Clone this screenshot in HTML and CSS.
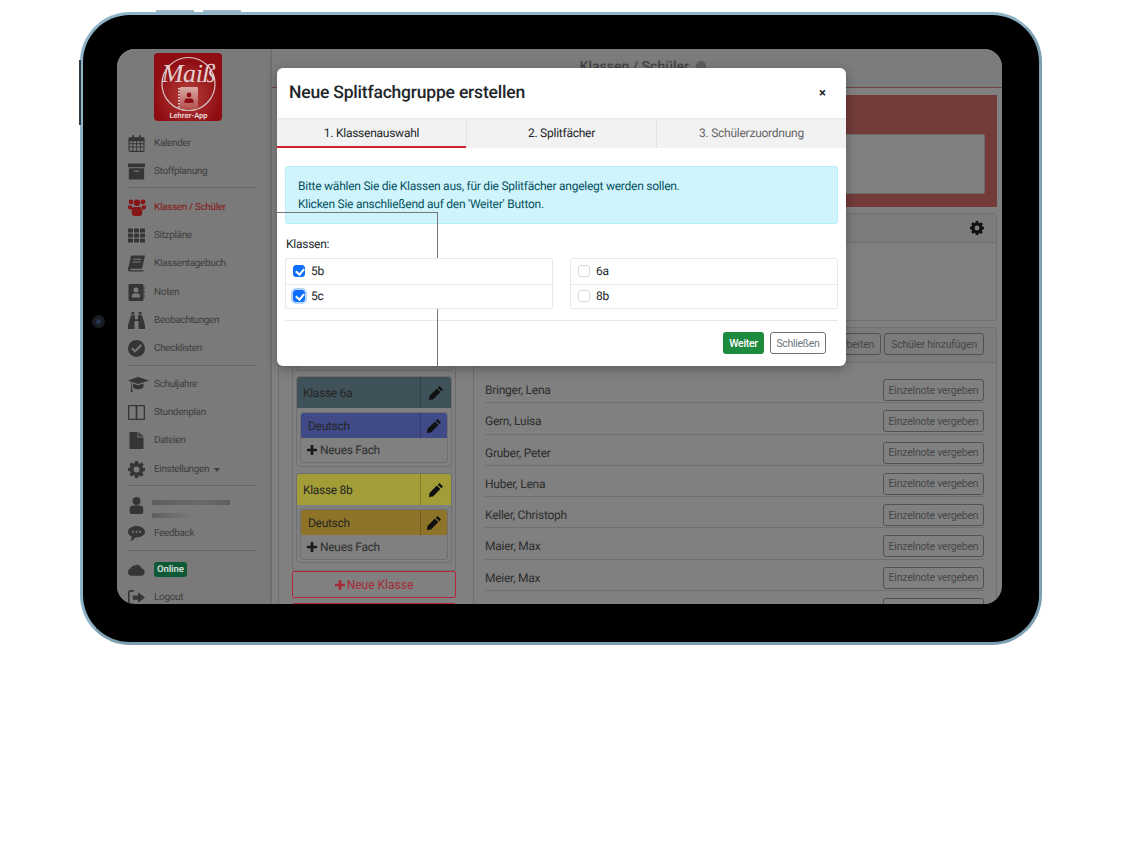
FILE: index.html
```html
<!DOCTYPE html>
<html lang="de">
<head>
  <meta charset="UTF-8">
  <title>Lehrer-App</title>
  <link rel="stylesheet" href="styles.css">
</head>
<body>

  <svg class="icon-defs" width="0" height="0">
    <symbol id="i-calendar" viewBox="0 0 17 18"><path fill-rule="evenodd" d="M1.5 2.5H4V1a1 1 0 0 1 2 0v1.500h5V1a1 1 0 0 1 2 0v1.500h2.500A1.500 1.500 0 0 1 17 4v12.500a1.500 1.500 0 0 1-1.500 1.500h-14A1.500 1.500 0 0 1 0 16.500V4a1.500 1.500 0 0 1 1.500-1.500zM1.200 6.500v2.300h3V6.500zm4 0v2.300h3V6.500zm4 0v2.300h3V6.500zm4 0v2.300h2.600V6.500zm-12 3.300v2.500h3V9.800zm4 0v2.500h3V9.800zm4 0v2.500h3V9.800zm4 0v2.500h2.600V9.800zm-12 3.500v3.400h3v-3.400zm4 0v3.400h3v-3.400zm4 0v3.400h3v-3.400zm4 0v3.400h2.600v-3.400z"/></symbol>
    <symbol id="i-archive" viewBox="0 0 16 15"><path fill-rule="evenodd" d="M0 0h16v3.500H0zM.8 4.500h14.400V15H.8zM5.500 6.500v1.200h5V6.500z"/></symbol>
    <symbol id="i-users" viewBox="0 0 18 17"><circle cx="3" cy="3" r="2.400"/><circle cx="15" cy="3" r="2.400"/><circle cx="9" cy="3.800" r="3.300"/><path d="M0 6.500h3.500c.8 1.300 1.300 2.500 1.300 4H2.200C.8 10.500 0 9.500 0 8.200zM18 6.500h-3.500c-.8 1.300-1.300 2.500-1.300 4h2.600c1.400 0 2.200-1 2.200-2.300zM6.500 8h5c1.700 0 2.700 1.500 2.700 3.500V14c0 1.700-1 3-2.800 3H6.600c-1.800 0-2.800-1.300-2.800-3v-2.500C3.800 9.500 4.800 8 6.500 8z"/></symbol>
    <symbol id="i-th" viewBox="0 0 17 14"><rect width="5" height="4" rx=".6"/><rect x="6" width="5" height="4" rx=".6"/><rect x="12" width="5" height="4" rx=".6"/><rect y="5" width="5" height="4" rx=".6"/><rect x="6" y="5" width="5" height="4" rx=".6"/><rect x="12" y="5" width="5" height="4" rx=".6"/><rect y="10" width="5" height="4" rx=".6"/><rect x="6" y="10" width="5" height="4" rx=".6"/><rect x="12" y="10" width="5" height="4" rx=".6"/></symbol>
    <symbol id="i-book" viewBox="0 0 16 15"><path fill-rule="evenodd" d="M3 0h13l-2.800 12.500H2.500a.7.7 0 0 0 0 1.300h12l-.3 1.200H2C.5 15-.3 14 .1 12.500zM5 3l-.2 1h7.500l.2-1zM4.400 5.500l-.2 1h7.500l.2-1z"/></symbol>
    <symbol id="i-contact" viewBox="0 0 16 17"><path fill-rule="evenodd" d="M1.500 0h12A1.500 1.500 0 0 1 15 1.500v14a1.500 1.500 0 0 1-1.500 1.500h-12A1.500 1.500 0 0 1 0 15.500v-14A1.500 1.500 0 0 1 1.500 0zM7.500 3.500a2.500 2.500 0 1 0 0 5 2.500 2.500 0 0 0 0-5zM3.500 13.500h8v-1.800c0-1.300-.9-2.200-2.100-2.200H5.600c-1.200 0-2.100.9-2.100 2.200z"/><rect x="15" y="3" width="1" height="2.500"/><rect x="15" y="7" width="1" height="2.500"/><rect x="15" y="11" width="1" height="2.500"/></symbol>
    <symbol id="i-binoculars" viewBox="0 0 17 17"><path d="M3.500 0h2.700v2.500H3.500zM10.800 0h2.700v2.500h-2.700zM3 3.300h4v4h3v-4h4l3 10V17h-6.500V9h-4v8H0v-3.700z"/></symbol>
    <symbol id="i-check" viewBox="0 0 16 16"><path fill-rule="evenodd" d="M8 0a8 8 0 1 1 0 16A8 8 0 0 1 8 0zM4.300 7 2.900 8.400l3.700 3.700 6.600-6.600L11.800 4.100 6.600 9.300z"/></symbol>
    <symbol id="i-cap" viewBox="0 0 21 15"><path d="M10 0l11 3.500-11 3.500-6-2v3.800c.5.500.5 1 0 1.500l.6 4.700H2.700l.6-4.700c-.5-.5-.5-1 0-1.500V4.700L0 3.500zM5 6.500l5 1.700 5.500-1.700v3.200c0 1.500-2.500 2.500-5.500 2.500s-5-1-5-2.500z"/></symbol>
    <symbol id="i-columns" viewBox="0 0 16 14"><path fill-rule="evenodd" d="M1 0h14a1 1 0 0 1 1 1v12a1 1 0 0 1-1 1H1a1 1 0 0 1-1-1V1a1 1 0 0 1 1-1zm.2 1.200v11.600h6V1.200zm7.600 0v11.600h6V1.200z"/></symbol>
    <symbol id="i-file" viewBox="0 0 14 17"><path d="M0 0h8v5.500h6V17H0zM9 0l5 4.500H9z"/></symbol>
    <symbol id="i-gear" viewBox="0 0 16 16"><path fill-rule="evenodd" d="M6.600 0h2.800l.4 2.200c.4.100.8.300 1.100.5l1.900-1.300 2 2-1.300 1.900c.2.300.4.700.5 1.100l2 .3v2.800l-2 .4c-.1.400-.3.800-.5 1.100l1.200 1.800-2 2-1.800-1.200c-.3.200-.7.400-1.100.5L9.400 16H6.600l-.4-2.100c-.4-.1-.8-.3-1.100-.5l-1.800 1.200-2-2 1.200-1.800c-.2-.3-.4-.7-.5-1.100L0 9.300V6.500l2-.4c.1-.4.300-.8.500-1.100L1.300 3.300l2-2 1.800 1.300c.3-.2.700-.4 1.100-.5zM8 5.200a2.800 2.800 0 1 0 0 5.600 2.800 2.800 0 0 0 0-5.600z"/></symbol>
    <symbol id="i-user" viewBox="0 0 12 15"><circle cx="6" cy="3.500" r="3.500"/><path d="M3 7.500h6c1.800 0 3 1.400 3 3.300V13c0 1.200-.8 2-2 2H2c-1.200 0-2-.8-2-2v-2.200c0-1.900 1.200-3.300 3-3.300z"/></symbol>
    <symbol id="i-comment" viewBox="0 0 17 15"><path fill-rule="evenodd" d="M8.500 0C13.200 0 17 2.500 17 5.800s-3.800 5.700-8.500 5.700h-1.200C6.200 13 4.500 14.500 2 15c1-1 1.600-2.200 1.800-4.200C1.500 9.800 0 8 0 5.800 0 2.500 3.800 0 8.500 0zM5 4.700a1.100 1.100 0 1 0 0 2.200 1.100 1.100 0 0 0 0-2.200zm3.500 0a1.100 1.100 0 1 0 0 2.200 1.100 1.100 0 0 0 0-2.200zm3.500 0a1.100 1.100 0 1 0 0 2.200 1.100 1.100 0 0 0 0-2.200z"/></symbol>
    <symbol id="i-cloud" viewBox="0 0 18 13"><path d="M4 13a4 4 0 0 1-1.200-7.800A4.500 4.500 0 0 1 7 2.200 5 5 0 0 1 14.500 5.500 3.800 3.800 0 0 1 14.500 13z"/></symbol>
    <symbol id="i-logout" viewBox="0 0 16 14"><path d="M5.500 0v1.500H3C2 1.500 1.500 2 1.500 3v8c0 1 .5 1.500 1.500 1.500h2.500V14H2.800C1 14 0 13 0 11.200V2.800C0 1 1 0 2.800 0zM9.500 2l6.500 5-6.500 5V9H4.500V5h5z"/></symbol>
    <symbol id="i-pencil" viewBox="0 0 14 14"><path d="M10.500 0 14 3.500 12.300 5.200 8.800 1.700zM7.900 2.600l3.500 3.500-7.400 7.400L0 14l.5-4z"/></symbol>
    <symbol id="i-plus" viewBox="0 0 10 10"><path d="M3.700 0h2.600v3.700H10v2.600H6.300V10H3.700V6.300H0V3.700h3.700z"/></symbol>
    <symbol id="i-info" viewBox="0 0 10 10"><circle cx="5" cy="5" r="5"/></symbol>
  </svg>

  <div class="tablet">
    <span class="side-btn btn-top1"></span>
    <span class="side-btn btn-top2"></span>
    <span class="side-btn btn-left"></span>
    <span class="camera"></span>

    <div class="screen">

      <aside class="sidebar">
        <div class="logo">
          <svg class="logo-art" viewBox="0 0 68 68" width="68" height="68">
            <defs>
              <radialGradient id="logo-glow" cx="50%" cy="62%" r="50%">
                <stop offset="0" stop-color="#b5403c"/>
                <stop offset="1" stop-color="#8f0d12"/>
              </radialGradient>
              <linearGradient id="logo-note" x1="0" y1="0" x2="0" y2="1">
                <stop offset="0" stop-color="#d8aaa6"/>
                <stop offset="1" stop-color="#b4504c"/>
              </linearGradient>
            </defs>
            <rect width="68" height="68" rx="4" fill="url(#logo-glow)"/>
            <circle cx="34.500" cy="31" r="26.500" fill="none" stroke="#d9c6c6" stroke-width="1.200"/>
            <text x="34.500" y="29" class="logo-script">Maiß</text>
            <line x1="25" y1="35" x2="25" y2="55" stroke="#d9c6c6" stroke-width="2" stroke-dasharray="1.500 1.500"/>
            <rect x="26" y="34" width="18" height="22" rx="1" fill="url(#logo-note)"/>
            <circle cx="35" cy="42" r="2.400" fill="#8f0d12"/>
            <path d="M30.500 50v-2c0-1.500 1-2.500 2.200-2.500h4.600c1.200 0 2.200 1 2.200 2.500v2z" fill="#8f0d12"/>
            <text x="34.500" y="65" class="logo-sub">Lehrer-App</text>
          </svg>
        </div>
        <a class="nav-item"><svg class="nav-icon"><use href="#i-calendar"/></svg>Kalender</a>
        <a class="nav-item"><svg class="nav-icon"><use href="#i-archive"/></svg>Stoffplanung</a>
        <div class="nav-sep"></div>
        <a class="nav-item active"><svg class="nav-icon"><use href="#i-users"/></svg>Klassen / Schüler</a>
        <a class="nav-item"><svg class="nav-icon"><use href="#i-th"/></svg>Sitzpläne</a>
        <a class="nav-item"><svg class="nav-icon"><use href="#i-book"/></svg>Klassentagebuch</a>
        <a class="nav-item"><svg class="nav-icon"><use href="#i-contact"/></svg>Noten</a>
        <a class="nav-item"><svg class="nav-icon"><use href="#i-binoculars"/></svg>Beobachtungen</a>
        <a class="nav-item"><svg class="nav-icon"><use href="#i-check"/></svg>Checklisten</a>
        <div class="nav-sep"></div>
        <a class="nav-item"><svg class="nav-icon wide"><use href="#i-cap"/></svg>Schuljahre</a>
        <a class="nav-item"><svg class="nav-icon"><use href="#i-columns"/></svg>Stundenplan</a>
        <a class="nav-item"><svg class="nav-icon"><use href="#i-file"/></svg>Dateien</a>
        <a class="nav-item"><svg class="nav-icon"><use href="#i-gear"/></svg>Einstellungen <span class="caret"></span></a>
        <div class="nav-sep"></div>
        <div class="nav-item nav-user">
          <svg class="nav-icon"><use href="#i-user"/></svg>
          <div class="blur-name">
            <span class="blur-line long"></span>
            <span class="blur-line short"></span>
          </div>
        </div>
        <a class="nav-item"><svg class="nav-icon"><use href="#i-comment"/></svg>Feedback</a>
        <div class="nav-sep"></div>
        <div class="nav-item"><svg class="nav-icon"><use href="#i-cloud"/></svg><span class="online">Online</span></div>
        <a class="nav-item"><svg class="nav-icon"><use href="#i-logout"/></svg>Logout</a>
      </aside>

      <main class="main">
        <div class="main-head">Klassen / Schüler <svg class="head-info"><use href="#i-info"/></svg></div>
        <div class="content">
          <div class="red-panel">
            <div class="fake-textarea"></div>
          </div>

          <div class="card settings-card">
            <div class="card-head"><svg class="gear"><use href="#i-gear"/></svg></div>
          </div>

          <div class="card class-card">
            <div class="card-head class-head">
              <button class="btn">Bearbeiten</button>
              <button class="btn">Schüler hinzufügen</button>
            </div>
            <div class="class-body">
              <div class="class-col">
                <div class="class-list">
                  <div class="class-stub"></div>

                  <div class="klasse">
                    <div class="bar bar-big teal"><span>Klasse 6a</span><i><svg class="pencil"><use href="#i-pencil"/></svg></i></div>
                    <div class="fach">
                      <div class="bar blue"><span>Deutsch</span><i><svg class="pencil"><use href="#i-pencil"/></svg></i></div>
                      <div class="new-fach"><svg class="plus"><use href="#i-plus"/></svg>Neues Fach</div>
                    </div>
                  </div>

                  <div class="klasse">
                    <div class="bar bar-big yellow"><span>Klasse 8b</span><i><svg class="pencil"><use href="#i-pencil"/></svg></i></div>
                    <div class="fach">
                      <div class="bar amber"><span>Deutsch</span><i><svg class="pencil"><use href="#i-pencil"/></svg></i></div>
                      <div class="new-fach"><svg class="plus"><use href="#i-plus"/></svg>Neues Fach</div>
                    </div>
                  </div>
                </div>
                <button class="new-class"><svg class="plus"><use href="#i-plus"/></svg>Neue Klasse</button>
                <div class="new-class next"></div>
              </div>

              <div class="pupils">
                <div class="pupil"><span>Bringer, Lena</span><button class="btn">Einzelnote vergeben</button></div>
                <div class="pupil"><span>Gern, Luisa</span><button class="btn">Einzelnote vergeben</button></div>
                <div class="pupil"><span>Gruber, Peter</span><button class="btn">Einzelnote vergeben</button></div>
                <div class="pupil"><span>Huber, Lena</span><button class="btn">Einzelnote vergeben</button></div>
                <div class="pupil"><span>Keller, Christoph</span><button class="btn">Einzelnote vergeben</button></div>
                <div class="pupil"><span>Maier, Max</span><button class="btn">Einzelnote vergeben</button></div>
                <div class="pupil"><span>Meier, Max</span><button class="btn">Einzelnote vergeben</button></div>
                <div class="pupil"><span>Müller, Anna</span><button class="btn">Einzelnote vergeben</button></div>
              </div>
            </div>
          </div>
        </div>
      </main>

      <!-- dialog -->
      <div class="modal">
        <div class="modal-head">
          <h2>Neue Splitfachgruppe erstellen</h2>
          <span class="close">×</span>
        </div>
        <div class="tabs">
          <div class="tab active">1. Klassenauswahl</div>
          <div class="tab">2. Splitfächer</div>
          <div class="tab muted">3. Schülerzuordnung</div>
        </div>
        <div class="modal-body">
          <div class="alert">
            Bitte wählen Sie die Klassen aus, für die Splitfächer angelegt werden sollen.<br>
            Klicken Sie anschließend auf den 'Weiter' Button.
          </div>
          <div class="label">Klassen:</div>
          <div class="lists">
            <div class="list">
              <label class="list-row"><span class="check on"></span>5b</label>
              <label class="list-row"><span class="check on focus"></span>5c</label>
            </div>
            <div class="list">
              <label class="list-row"><span class="check"></span>6a</label>
              <label class="list-row"><span class="check"></span>8b</label>
            </div>
          </div>
        </div>
        <div class="modal-foot">
          <button class="btn-go">Weiter</button>
          <button class="btn-close">Schließen</button>
        </div>
        <span class="stray-line"></span>
      </div>

    </div>
  </div>

</body>
</html>
```

FILE: styles.css
```css
* {
  box-sizing: border-box;
}
html, body {
  height: 100%;
}
body {
  margin: 0;
  background-color: #fff;
  font-family: Roboto, "Liberation Sans", sans-serif;
  text-rendering: geometricPrecision;
}
.icon-defs {
  position: absolute;
}

/* device */
.tablet {
  position: relative;
  width: 962px;
  height: 633px;
  margin: 12px 0 0 80px;
  padding: 34px 36px 37px 34px;
  background-color: #000;
  border: 3px solid #8fb4c8;
  border-right-color: #7c9fb2;
  border-bottom-color: #7c9fb2;
  border-radius: 50px;
}
.side-btn {
  position: absolute;
  background-color: #9db8c6;
}
.btn-top1 {
  left: 73px;
  top: -5px;
  width: 38px;
  height: 2px;
}
.btn-top2 {
  left: 120px;
  top: -5px;
  width: 38px;
  height: 2px;
}
.btn-left {
  left: -4px;
  top: 45px;
  width: 2px;
  height: 65px;
  background-color: #2c3a44;
}
.camera {
  position: absolute;
  left: 9px;
  top: 300px;
  width: 13px;
  height: 13px;
  border-radius: 50%;
  background: radial-gradient(circle, #2f4a78 0, #1c2026 30%, #14171c 100%);
}
.screen {
  position: relative;
  display: flex;
  width: 885px;
  height: 555px;
  overflow: hidden;
  background-color: #808080;
  border-radius: 18px;
}

/* sidebar */
.sidebar {
  flex: none;
  width: 155px;
  padding: 4px 14px 0 11px;
  background-color: #7a7a7a;
  border-right: 2px solid #6e6e6e;
  color: #3e3e3e;
  font-size: 10px;
  letter-spacing: -.35px;
}
.logo {
  height: 76px;
  padding-left: 26px;
}
.logo-art {
  display: block;
}
.logo-script {
  font-family: "Liberation Serif", serif;
  font-style: italic;
  font-size: 26px;
  fill: #e3d0d0;
  text-anchor: middle;
}
.logo-sub {
  font-family: Roboto, sans-serif;
  font-weight: 700;
  font-size: 7.500px;
  letter-spacing: 0;
  fill: #e3d0d0;
  text-anchor: middle;
}
.nav-item {
  display: flex;
  align-items: center;
  height: 28.2px;
  white-space: nowrap;
}
.nav-icon {
  flex: none;
  width: 17px;
  height: 17px;
  margin-right: 9px;
  fill: #353535;
}
.nav-icon.wide {
  width: 21px;
  margin-right: 5px;
}
.nav-item.active {
  color: #861618;
}
.nav-item.active .nav-icon {
  width: 18px;
  margin-right: 8px;
  fill: #861618;
}
.nav-sep {
  height: 1px;
  margin: 2px 0 5px;
  background-color: #666;
}
.caret {
  display: inline-block;
  margin: 2px 0 0 5px;
  border-top: 4px solid #3e3e3e;
  border-left: 3.500px solid transparent;
  border-right: 3.500px solid transparent;
}
.nav-user .nav-icon {
  margin-right: 7px;
}
.blur-name {
  flex: 1;
  padding-top: 7px;
}
.blur-line {
  display: block;
  height: 5px;
  background: linear-gradient(90deg, #5e5e5e, #6a6a6a 60%, #5e5e5e);
  filter: blur(.6px);
}
.blur-line.long {
  width: 78px;
}
.blur-line.short {
  width: 40px;
  margin-top: 8px;
  background: linear-gradient(90deg, #5e5e5e, #7a7a7a);
}
.online {
  padding: 2px 3px;
  background-color: #0e5a36;
  border-radius: 3px;
  color: #c9d6cf;
  font-size: 9.500px;
  font-weight: 700;
  letter-spacing: -.1px;
}

/* page behind dialog */
.main {
  flex: 1;
  min-width: 0;
}
.main-head {
  height: 39px;
  padding: 10px 0 0 12px;
  background-color: #7c7c7c;
  border-bottom: 1px solid #6f4342;
  color: #444;
  font-size: 14px;
  font-weight: 500;
  text-align: center;
}
.head-info {
  width: 10px;
  height: 10px;
  margin-left: 4px;
  fill: #5e5e5e;
}
.content {
  padding: 7px 5px 0 6px;
}
.red-panel {
  height: 112px;
  padding: 39px 12px 0 0;
  background-color: #733c3a;
}
.fake-textarea {
  height: 60px;
  background-color: #808080;
  border: 1px solid #6c6c6c;
  border-radius: 2px;
}
.card {
  background-color: #808080;
  border: 1px solid #6f6f6f;
  border-radius: 3px;
}
.settings-card {
  height: 108px;
  margin-top: 6px;
}
.card-head {
  display: flex;
  justify-content: flex-end;
  align-items: center;
  gap: 3px;
  height: 29px;
  padding-right: 12px;
  background-color: #7c7c7c;
  border-bottom: 1px solid #6f6f6f;
}
.gear {
  width: 14px;
  height: 14px;
  fill: #111;
}
.class-card {
  height: 300px;
  margin-top: 6px;
}
.class-head {
  height: 35px;
  padding: 0 12px 2px 0;
}
.btn {
  flex: none;
  height: 22px;
  padding: 0 6px;
  background: transparent;
  border: 1px solid #525252;
  border-radius: 3px;
  color: #474747;
  font-family: inherit;
  font-size: 10.5px;
  letter-spacing: -.2px;
  white-space: nowrap;
}
.class-body {
  display: flex;
}
.class-col {
  flex: none;
  width: 195px;
  height: 260px;
  padding-left: 13px;
  border-right: 1px solid #6f6f6f;
}
.class-list {
  width: 164px;
  height: 208px;
  padding: 0 3px;
  border: 1px solid #6f6f6f;
  border-top: 0;
  border-radius: 0 0 3px 3px;
}
.class-stub {
  height: 8px;
  margin-bottom: 5px;
  border: 1px solid #6f6f6f;
  border-top: 0;
}
.klasse {
  height: 91px;
  margin-bottom: 6px;
  border: 1px solid #6f6f6f;
  border-radius: 3px;
}
.klasse:last-child {
  height: 90px;
}
.bar {
  display: flex;
  align-items: stretch;
  height: 25px;
  border-radius: 3px 3px 0 0;
  color: #252525;
  font-size: 12px;
  letter-spacing: -.3px;
}
.bar span {
  flex: 1;
  align-self: center;
  padding-left: 7px;
}
.bar i {
  display: flex;
  align-items: center;
  justify-content: center;
  flex: none;
  width: 27px;
  border-left: 1px solid rgba(0, 0, 0, .2);
}
.bar-big {
  height: 31px;
}
.bar-big span {
  padding-left: 6px;
}
.bar-big i {
  width: 31px;
}
.teal {
  background-color: #3f525a;
}
.blue {
  background-color: #3f4a87;
}
.yellow {
  background-color: #a39d38;
}
.amber {
  background-color: #8e7429;
}
.pencil {
  width: 14px;
  height: 14px;
  fill: #111;
}
.fach {
  margin: 4px 3px 0;
  border: 1px solid #6f6f6f;
  border-radius: 3px;
}
.new-fach {
  display: flex;
  align-items: center;
  height: 24px;
  padding-left: 6px;
  color: #2e2e2e;
  font-size: 12px;
  letter-spacing: -.3px;
}
.plus {
  flex: none;
  width: 10px;
  height: 10px;
  margin-right: 3px;
  fill: #1a1a1a;
}
.new-class {
  display: flex;
  align-items: center;
  justify-content: center;
  width: 164px;
  height: 27px;
  margin-top: 0;
  background: transparent;
  border: 1px solid #b5283c;
  border-radius: 2px;
  color: #a52a36;
  font-family: inherit;
  font-size: 12px;
}
.new-class .plus {
  margin-right: 2px;
  fill: #a52a36;
}
.new-class.next {
  margin-top: 5px;
}
.pupils {
  flex: 1;
  min-width: 0;
  padding: 9px 12px 0 11px;
}
.pupil {
  display: flex;
  justify-content: space-between;
  height: 31.3px;
  padding-top: 7px;
  border-bottom: 1px solid #6f6f6f;
  color: #2c2c2c;
  font-size: 12px;
  letter-spacing: -.25px;
}
.pupil span {
  line-height: 22px;
}
.pupil .btn {
  width: 101px;
  padding: 0;
}

/* dialog */
.modal {
  position: absolute;
  left: 160px;
  top: 19px;
  width: 569px;
  height: 298px;
  background-color: #fff;
  border-radius: 6px;
  box-shadow: 0 3px 12px rgba(0, 0, 0, .3);
  color: #212529;
  overflow: hidden;
}
.modal-head {
  display: flex;
  justify-content: space-between;
  align-items: center;
  height: 50px;
  padding: 0 20px 0 12px;
}
.modal-head h2 {
  margin: 0;
  font-size: 17.500px;
  font-weight: 500;
  letter-spacing: -.2px;
}
.close {
  font-size: 13px;
  font-weight: 700;
  color: #222;
}
.tabs {
  display: flex;
  height: 30px;
  background-color: #f2f2f2;
  border-top: 1px solid #eaeaea;
}
.tab {
  flex: 1;
  padding-top: 7px;
  border-left: 1px solid #e4e4e4;
  font-size: 12px;
  letter-spacing: -.25px;
  text-align: center;
}
.tab:first-child {
  border-left: 0;
}
.tab.active {
  border-bottom: 2px solid #d5202f;
}
.tab.muted {
  color: #666;
}
.modal-body {
  padding: 18px 8px 0;
}
.alert {
  height: 58px;
  padding: 11px 12px;
  background-color: #cff4fc;
  border: 1px solid #b6effb;
  border-radius: 3px;
  color: #055160;
  font-size: 12px;
  letter-spacing: -.25px;
  line-height: 17.5px;
}
.label {
  margin: 13px 0 0 1px;
  font-size: 12px;
  letter-spacing: -.25px;
  line-height: 15px;
}
.lists {
  position: relative;
  z-index: 1;
  display: grid;
  grid-template-columns: 268px 268px;
  gap: 17px;
  margin-top: 6px;
}
.list {
  background-color: #fff;
  border: 1px solid #e6e9ec;
  border-radius: 2px;
}
.list-row {
  display: flex;
  align-items: center;
  height: 24.5px;
  padding-left: 7px;
  font-size: 12px;
  letter-spacing: -.2px;
}
.list-row + .list-row {
  border-top: 1px solid #e6e9ec;
}
.check {
  flex: none;
  position: relative;
  width: 12px;
  height: 12px;
  margin-right: 6px;
  background-color: #fff;
  border: 1px solid #d5d9dd;
  border-radius: 3px;
}
.check.on {
  background-color: #0d6efd;
  border-color: #0d6efd;
}
.check.on::after {
  content: "";
  position: absolute;
  left: 3px;
  top: 1px;
  width: 4px;
  height: 6px;
  border-right: 2px solid #fff;
  border-bottom: 2px solid #fff;
  transform: rotate(40deg);
}
.check.focus {
  box-shadow: 0 0 0 2px #b6d4fe;
}
.modal-foot {
  display: flex;
  justify-content: flex-end;
  gap: 6px;
  margin: 11px 8px 0;
  padding: 11px 12px 0 0;
  border-top: 1px solid #e6e9ec;
}
.btn-go, .btn-close {
  height: 22px;
  border-radius: 3px;
  font-family: inherit;
  font-size: 10.5px;
  letter-spacing: -.3px;
}
.btn-go {
  width: 41px;
  padding: 0;
  background-color: #1e8a3e;
  border: 0;
  color: #fff;
  font-weight: 500;
}
.btn-close {
  width: 56px;
  padding: 0;
  background-color: #fff;
  border: 1px solid #6c757d;
  color: #6c757d;
}
.stray-line {
  position: absolute;
  left: 0;
  top: 144px;
  width: 161px;
  height: 154px;
  border-top: 1px solid #777;
  border-right: 1px solid #777;
}
```
